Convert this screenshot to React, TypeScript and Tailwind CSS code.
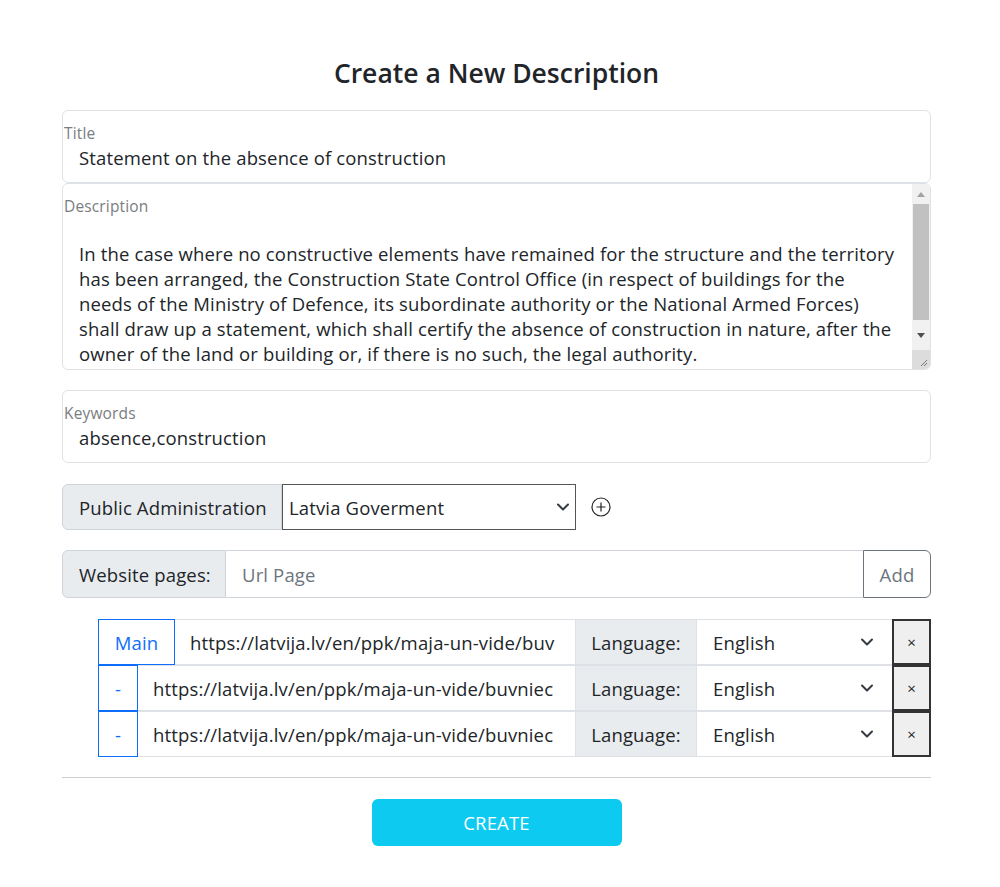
import React from "react";

const font = { fontFamily: '"Open Sans", "Noto Sans", sans-serif' };

function Chevron({ className = "" }: { className?: string }) {
  return (
    <svg width="14" height="10" viewBox="0 0 14 10" className={className}>
      <path d="M2 2.5 L7 7.5 L12 2.5" fill="none" stroke="#343a40" strokeWidth="2" strokeLinecap="round" strokeLinejoin="round" />
    </svg>
  );
}

function UrlRow({ main, url }: { main: boolean; url: string }) {
  return (
    <div className="flex h-[46px]">
      <div
        className={`flex shrink-0 items-center justify-center border border-[#0d6efd] text-[#0d6efd] ${main ? "w-[77px]" : "w-[40px]"}`}
      >
        {main ? "Main" : "-"}
      </div>
      <div className="flex min-w-0 flex-1 items-center border-y border-[#dee2e6] pl-[15px] pr-[15px]">
        <div className="min-w-0 flex-1 overflow-hidden whitespace-nowrap text-[#212529]">{url}</div>
      </div>
      <div className="flex w-[122px] shrink-0 items-center justify-center border border-[#dee2e6] bg-[#e9ecef] text-[#212529]">
        Language:
      </div>
      <div className="flex w-[195px] shrink-0 items-center justify-between border-y border-[#dee2e6] pl-[16px] pr-[18px] text-[#212529]">
        <span>English</span>
        <Chevron />
      </div>
      <div className="flex w-[39px] shrink-0 items-center justify-center border-2 border-[#333] bg-[#efefef] text-[15px] text-[#212529]">
        ×
      </div>
    </div>
  );
}

export default function App() {
  return (
    <div className="min-h-[887px] bg-white text-[18.5px] leading-[25px] tracking-[0.15px] text-[#212529]" style={font}>
      <div className="ml-[62px] w-[869px] pt-[56px]">
        <h1 className="text-center text-[26.5px] font-semibold leading-[34px] tracking-normal text-[#212529]">
          Create a New Description
        </h1>

        {/* Title */}
        <div className="mt-[20px] h-[73px] rounded-[6px] border border-[#dee2e6] pt-[12px]">
          <div className="pl-[1px] text-[15.5px] leading-[20px] text-[#7a7d80]">Title</div>
          <div className="mt-[2px] pl-[16px]">Statement on the absence of construction</div>
        </div>

        {/* Description */}
        <div className="flex h-[187px] overflow-hidden rounded-[6px] border border-[#dee2e6]">
          <div className="flex-1 pt-[12px]">
            <div className="pl-[1px] text-[15.5px] leading-[20px] text-[#7a7d80]">Description</div>
            <div className="mt-[25px] pl-[16px] pr-[14px]">
              In the case where no constructive elements have remained for the structure and the territory has been
              arranged, the Construction State Control Office (in respect of buildings for the needs of the Ministry
              of Defence, its subordinate authority or the National Armed Forces) shall draw up a statement, which shall
              certify the absence of construction in nature, after the owner of the land or building or, if there is no
              such, the legal authority.
            </div>
          </div>
          <div className="flex w-[18px] shrink-0 flex-col bg-[#f1f1f1]">
            <div className="flex h-[20px] items-center justify-center">
              <svg width="8" height="5" viewBox="0 0 8 5"><path d="M0 5 L4 0 L8 5 Z" fill="#a3a3a3" /></svg>
            </div>
            <div className="mx-[1px] h-[116px] bg-[#c1c1c1]" />
            <div className="flex h-[30px] items-center justify-center">
              <svg width="8" height="5" viewBox="0 0 8 5"><path d="M0 0 L4 5 L8 0 Z" fill="#505050" /></svg>
            </div>
            <div className="flex flex-1 items-end justify-end bg-[#dcdcdc] p-[2px]">
              <svg width="8" height="8" viewBox="0 0 8 8">
                <path d="M1 7 L7 1 M4 7 L7 4" stroke="#777" strokeWidth="1" />
              </svg>
            </div>
          </div>
        </div>

        {/* Keywords */}
        <div className="mt-[20px] h-[73px] rounded-[6px] border border-[#dee2e6] pt-[12px]">
          <div className="pl-[1px] text-[15.5px] leading-[20px] text-[#7a7d80]">Keywords</div>
          <div className="mt-[2px] pl-[16px]">absence,construction</div>
        </div>

        {/* Public Administration */}
        <div className="mt-[21px] flex h-[46px] items-center">
          <div className="flex h-full w-[220px] items-center rounded-l-[6px] border border-[#ced4da] bg-[#e9ecef] pl-[16px]">
            Public Administration
          </div>
          <div className="flex h-full w-[294px] items-center justify-between border border-[#555] pl-[6px] pr-[5px]">
            <span>Latvia Goverment</span>
            <Chevron />
          </div>
          <svg width="20" height="20" viewBox="0 0 20 20" className="ml-[15px]">
            <circle cx="10" cy="10" r="9" fill="none" stroke="#222" strokeWidth="1.2" />
            <path d="M10 5.5 V14.5 M5.5 10 H14.5" stroke="#222" strokeWidth="1.2" />
          </svg>
        </div>

        {/* Website pages */}
        <div className="mt-[20px] flex h-[48px]">
          <div className="flex w-[164px] items-center rounded-l-[6px] border border-[#ced4da] bg-[#e9ecef] pl-[16px]">
            Website pages:
          </div>
          <div className="flex flex-1 items-center border-y border-[#ced4da] pl-[16px] text-[#6c757d]">Url Page</div>
          <div className="flex w-[68px] items-center justify-center rounded-r-[6px] border border-[#6c757d] text-[#6c757d]">
            Add
          </div>
        </div>

        {/* URL list */}
        <div className="ml-[36px] mt-[21px] flex flex-col">
          <UrlRow main url="https://latvija.lv/en/ppk/maja-un-vide/buv" />
          <UrlRow main={false} url="https://latvija.lv/en/ppk/maja-un-vide/buvniec" />
          <UrlRow main={false} url="https://latvija.lv/en/ppk/maja-un-vide/buvniec" />
        </div>

        <div className="mt-[20px] border-t border-[#cfcfcf]" />

        <div className="mt-[21px] flex justify-center">
          <button className="h-[47px] w-[250px] rounded-[6px] bg-[#0dcaf0] text-[18.5px] text-white">CREATE</button>
        </div>
      </div>
    </div>
  );
}
